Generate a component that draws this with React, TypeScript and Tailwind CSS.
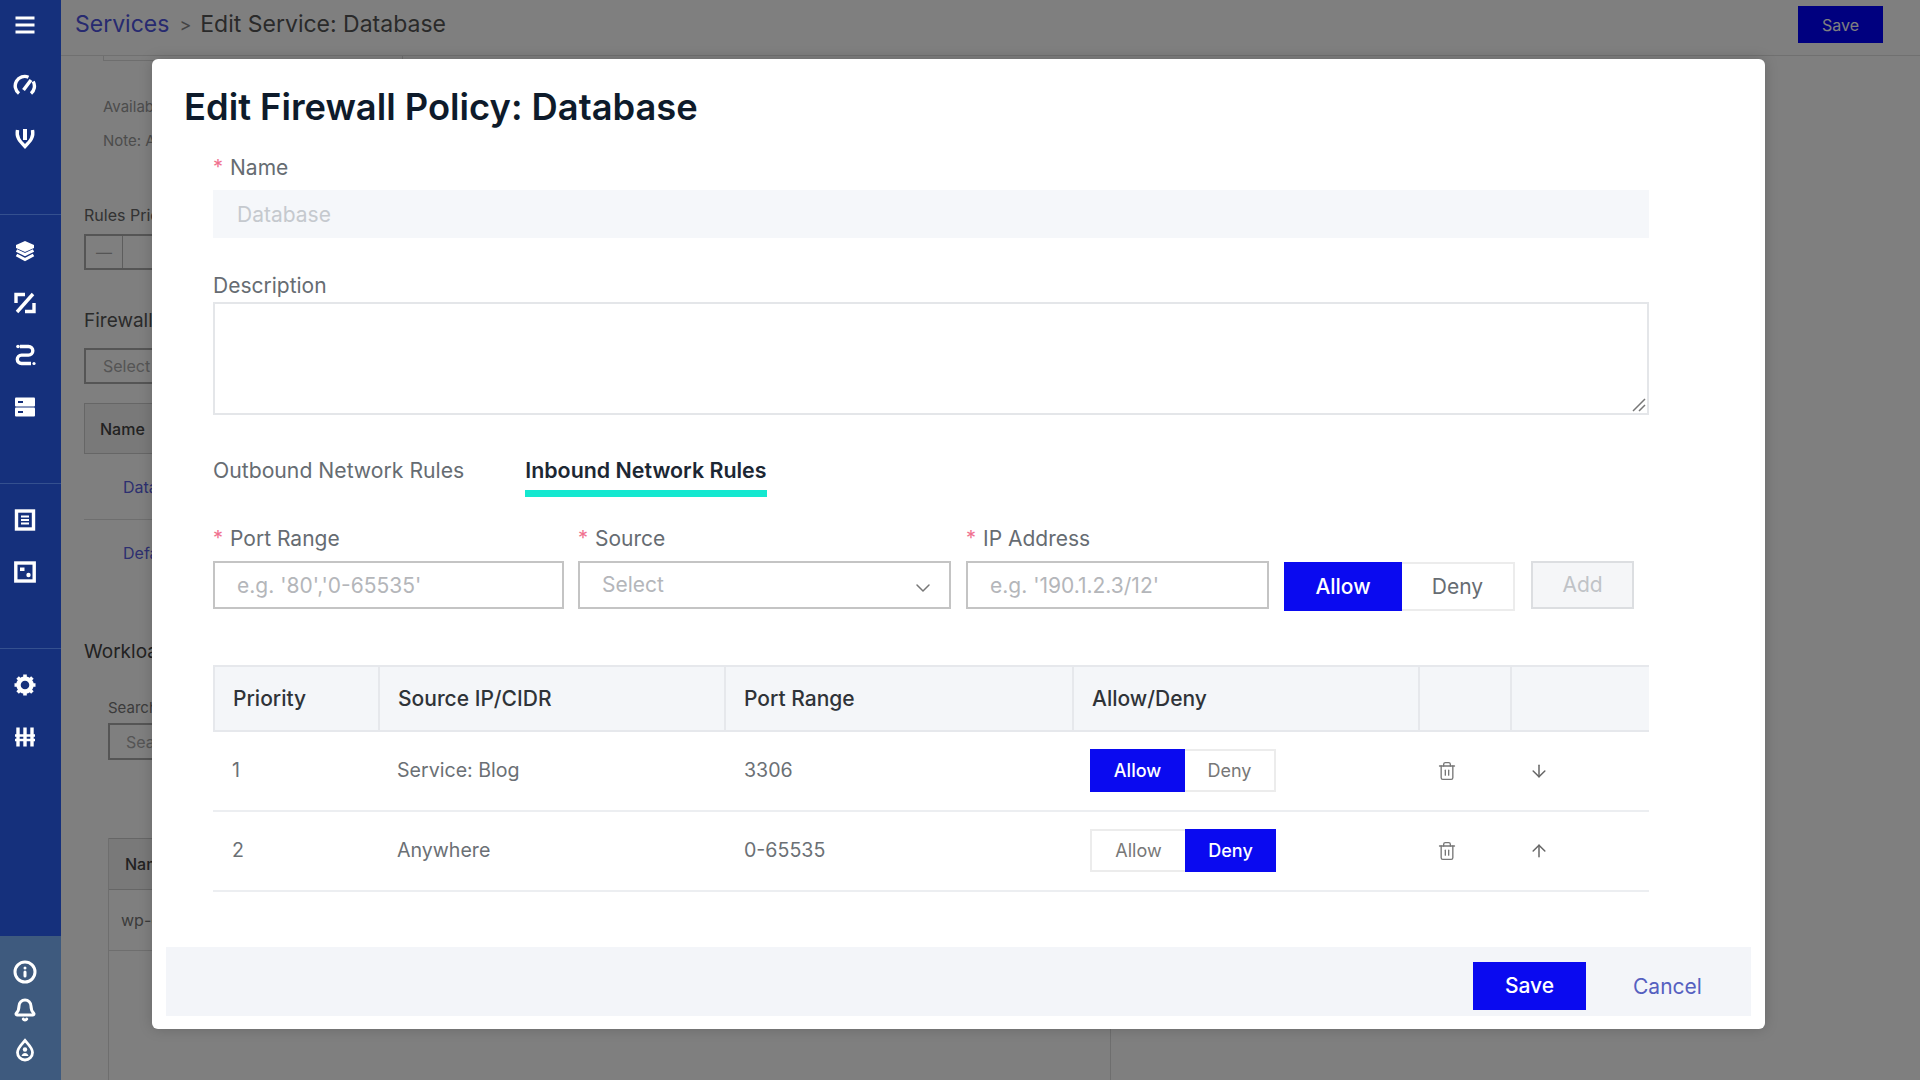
import { ArrowDown, ArrowUp, Bell, ChevronDown, Info, Trash2 } from "lucide-react"
import type { ReactNode } from "react"

function Glyph({ children }: { children: ReactNode }) {
  return (
    <svg viewBox="0 0 24 24" width="24" height="24" fill="none" stroke="white" strokeWidth="3" className="block">
      {children}
    </svg>
  )
}

const MenuIcon = () => (
  <Glyph>
    <path d="M2.5 5h19M2.500 12h19M2.500 19h19" />
  </Glyph>
)

const GaugeIcon = () => (
  <Glyph>
    <path d="M6 19.500A9.500 9.500 0 0 1 15.500 3.200M20.200 7.500a9.500 9.500 0 0 1-2.200 12" strokeWidth="3.400" />
    <path d="M10.500 16 18 6" strokeWidth="3.400" />
  </Glyph>
)

const ShieldIcon = () => (
  <Glyph>
    <path d="M4.500 4C3 11 6.500 15 12 20.500C17.500 15 21 11 19.500 4" strokeWidth="3.400" />
    <path d="M12 3v11" strokeWidth="4" />
  </Glyph>
)

const LayersIcon = () => (
  <Glyph>
    <path d="M12 2l9 4v3l-9 4-9-4V6z" fill="white" stroke="none" />
    <path d="M3.500 11.500 12 15.500l8.500-4M3.500 16 12 20.500l8.500-4.500" strokeWidth="3" />
  </Glyph>
)

const PercentIcon = () => (
  <Glyph>
    <path d="M4 21 20 3" strokeWidth="3.400" />
    <path d="M3 12V3.500H12M21 12v8.500H12" strokeWidth="3.400" />
  </Glyph>
)

const RouteIcon = () => (
  <Glyph>
    <circle cx="5" cy="3.500" r="1.800" fill="white" stroke="none" />
    <path d="M7 3.500h8.500a4.300 4.300 0 0 1 0 8.600H8.500a4.200 4.200 0 0 0 0 8.400H18" strokeWidth="3.400" />
    <circle cx="21" cy="20.500" r="1.600" fill="white" stroke="none" />
  </Glyph>
)

const ServerIcon = () => (
  <svg viewBox="0 0 24 24" width="24" height="24" className="block">
    <rect x="2" y="2.500" width="20" height="9" rx="1" fill="white" />
    <rect x="2" y="12.500" width="20" height="9" rx="1" fill="white" />
    <rect x="5" y="6" width="5" height="2" fill="#15307c" />
    <rect x="5" y="16" width="5" height="2" fill="#15307c" />
  </svg>
)

const ListIcon = () => (
  <Glyph>
    <rect x="3.500" y="3" width="17" height="18" strokeWidth="3.400" />
    <path d="M8 8.500h8M8 12h8M8 15.500h8" strokeWidth="2" />
  </Glyph>
)

const ExpandIcon = () => (
  <Glyph>
    <rect x="2.800" y="3" width="18.400" height="18" strokeWidth="3.400" />
    <path d="M7 7.500h4.500v3.500H7z" fill="white" stroke="none" />
    <circle cx="15.500" cy="15" r="2.200" fill="white" stroke="none" />
  </Glyph>
)

const GearIcon = () => (
  <Glyph>
    <circle cx="12" cy="12" r="6.500" strokeWidth="4.400" />
    <path d="M12 1.500v3M12 19.500v3M1.500 12h3M19.500 12h3M4.600 4.600l2 2M17.400 17.400l2 2M4.600 19.400l2-2M17.400 6.600l2-2" strokeWidth="3.600" />
  </Glyph>
)

const SlidersIcon = () => (
  <Glyph>
    <path d="M5 2.500v19M12 2.500v19M19 2.500v19" strokeWidth="3.400" />
    <path d="M2 10.500h20M2 15h20" strokeWidth="2.600" />
  </Glyph>
)

const DropIcon = () => (
  <Glyph>
    <path d="M12 2.500C9 6 4.500 10 4.500 14.500a7.500 7.500 0 0 0 15 0C19.500 10 15 6 12 2.500Z" strokeWidth="2.800" />
    <circle cx="12" cy="11.500" r="2.200" fill="white" stroke="none" />
    <path d="M8.500 18c.5-2 2-3 3.500-3s3 1 3.500 3z" fill="white" stroke="none" />
  </Glyph>
)

function Sidebar() {
  return (
    <aside className="relative z-20 flex h-full w-[61px] shrink-0 flex-col bg-[#15307c]">
      <div className="flex h-[215px] shrink-0 flex-col items-center border-b border-[#34508f] pr-[12px]">
        <div className="mt-[13px]"><MenuIcon /></div>
        <div className="mt-[37px]"><GaugeIcon /></div>
        <div className="mt-[28px]"><ShieldIcon /></div>
      </div>
      <div className="flex h-[269px] shrink-0 flex-col items-center gap-[28px] border-b border-[#34508f] pt-[24px] pr-[12px]">
        <LayersIcon />
        <PercentIcon />
        <RouteIcon />
        <ServerIcon />
      </div>
      <div className="flex h-[165px] shrink-0 flex-col items-center gap-[28px] border-b border-[#34508f] pt-[24px] pr-[12px]">
        <ListIcon />
        <ExpandIcon />
      </div>
      <div className="flex flex-1 flex-col items-center gap-[28px] pt-[24px] pr-[12px]">
        <GearIcon />
        <SlidersIcon />
      </div>
      <div className="flex h-[144px] shrink-0 flex-col items-center bg-[#3e5a7e] pt-[24px] pr-[11px]">
        <Info size={24} color="white" strokeWidth={3} />
        <div className="mt-[14px]"><Bell size={24} color="white" strokeWidth={3} /></div>
        <div className="mt-[16px]"><DropIcon /></div>
      </div>
    </aside>
  )
}

// the page behind the dialog, only its left edge shows
function BackgroundPage() {
  return (
    <main className="flex min-w-0 flex-1 flex-col bg-white">
      <header className="flex h-[56px] shrink-0 items-center border-b border-[#e0e0e0] pb-[6px] pl-[14px] pr-[37px]">
        <span className="text-[23px] text-[#4f55e0]">Services</span>
        <span className="ml-[10px] mr-[9px] text-[18px] text-[#888]">&gt;</span>
        <span className="text-[23px] text-[#555]">Edit Service: Database</span>
        <button className="ml-auto h-[37px] w-[85px] bg-[#0000ff] text-[16px] text-white">Save</button>
      </header>
      <div className="flex flex-col pl-[23px]">
        <div className="ml-[19px] h-[5px] w-[300px] border border-t-0 border-[#ddd]" />
        <p className="ml-[19px] mt-[36px] text-[15px] leading-[20px] text-[#999]">Available</p>
        <p className="ml-[19px] mt-[14px] text-[15px] leading-[20px] text-[#999]">Note: All</p>
        <p className="mt-[52px] text-[16px] leading-[24px] text-[#666]">Rules Priority</p>
        <div className="mt-[7px] flex h-[36px] w-[200px] border-2 border-[#aaa]">
          <span className="flex w-[37px] items-center justify-center border-r border-[#bbb] text-[#aaa]">—</span>
        </div>
        <p className="mt-[37px] text-[19px] leading-[28px] text-[#555]">Firewall Policies</p>
        <div className="mt-[13px] flex h-[36px] w-[300px] items-center border-2 border-[#aaa] pl-[17px] text-[16px] text-[#aaa]">Select</div>
        <div className="mt-[19px] flex h-[51px] w-[1000px] items-center border border-[#ccc] bg-[#f2f2f2] pl-[15px] text-[16px] font-medium text-[#444]">Name</div>
        <div className="flex h-[66px] w-[1000px] items-center border-b border-[#ddd] pl-[39px] text-[16px] text-[#5a5fe0]">Database</div>
        <div className="flex h-[66px] w-[1000px] items-center pl-[39px] text-[16px] text-[#5a5fe0]">Default</div>
        <p className="mt-[52px] text-[19px] leading-[28px] text-[#444]">Workloads</p>
        <p className="ml-[24px] mt-[32px] text-[15px] leading-[20px] text-[#777]">Search</p>
        <div className="ml-[24px] mt-[5px] flex h-[37px] w-[300px] items-center border-2 border-[#aaa] pl-[16px] text-[16px] text-[#aaa]">Search</div>
        <div className="ml-[24px] mt-[78px] h-[400px] w-[1003px] border-x border-[#ddd]">
          <div className="flex h-[52px] items-center border-y border-[#ccc] bg-[#f2f2f2] pl-[16px] text-[16px] font-medium text-[#444]">Name</div>
          <div className="flex h-[61px] items-center border-b border-[#ddd] pl-[12px] text-[16px] text-[#777]">wp-deploy</div>
        </div>
      </div>
    </main>
  )
}

function FieldLabel({ required, children }: { required?: boolean; children: ReactNode }) {
  return (
    <label className="flex h-[28px] items-center text-[21px] text-[#666c72]">
      {required && <span className="mr-[7px] mt-[-2px] text-[20px] text-[#f0708f]">*</span>}
      {children}
    </label>
  )
}

const inputClass =
  "h-[48px] w-full border-2 border-[#c4c4c4] bg-white px-[22px] text-[21px] outline-none placeholder:text-[#b4b6ba]"

function RowToggle({ value }: { value: "Allow" | "Deny" }) {
  const allowOn = value === "Allow"
  return (
    <div className="mt-[-1px] flex h-[43px] w-[186px] text-[18px]">
      <span className={allowOn
        ? "flex w-[95px] items-center justify-center bg-[#0a0af0] font-medium text-white"
        : "flex w-[95px] items-center justify-center border-2 border-r-0 border-[#ececec] text-[#777]"}>
        Allow
      </span>
      <span className={allowOn
        ? "flex w-[91px] items-center justify-center border-2 border-l-0 border-[#ececec] text-[#777]"
        : "flex w-[91px] items-center justify-center bg-[#0a0af0] font-medium text-white"}>
        Deny
      </span>
    </div>
  )
}

const rows = [
  { priority: "1", source: "Service: Blog", port: "3306", action: "Allow" as const, up: false },
  { priority: "2", source: "Anywhere", port: "0-65535", action: "Deny" as const, up: true },
]

const gridCols = "grid grid-cols-[167px_346px_348px_346px_92px_137px]"

function RulesTable() {
  return (
    <div className="mt-[56px] w-[1436px]">
      <div className={`${gridCols} h-[67px] border-y-2 border-[#e6e8ec] bg-[#f4f6f9] text-[21px] font-medium text-[#2f3338]`}>
        <div className="flex items-center border-x-2 border-[#e6e8ec] pl-[18px]">Priority</div>
        <div className="flex items-center border-r-2 border-[#e6e8ec] pl-[18px]">Source IP/CIDR</div>
        <div className="flex items-center border-r-2 border-[#e6e8ec] pl-[18px]">Port Range</div>
        <div className="flex items-center border-r-2 border-[#e6e8ec] pl-[18px]">Allow/Deny</div>
        <div className="border-r-2 border-[#e6e8ec]" />
        <div />
      </div>
      {rows.map((row) => (
        <div key={row.priority} className={`${gridCols} h-[80px] items-center border-b-2 border-[#eceef1] text-[19.600px] text-[#6b7075]`}>
          <div className="pl-[19px]">{row.priority}</div>
          <div className="pl-[17px]">{row.source}</div>
          <div className="pl-[18px]">{row.port}</div>
          <div className="pl-[16px]"><RowToggle value={row.action} /></div>
          <div className="pl-[17px]"><Trash2 size={20} strokeWidth={1.6} color="#777" /></div>
          <div className="pl-[17px]">
            {row.up ? <ArrowUp size={20} strokeWidth={1.8} color="#666" /> : <ArrowDown size={20} strokeWidth={1.8} color="#666" />}
          </div>
        </div>
      ))}
    </div>
  )
}

function PolicyDialog() {
  return (
    <div className="absolute left-[152px] top-[59px] z-20 flex h-[970px] w-[1613px] flex-col rounded-md bg-white shadow-[0_0_14px_rgba(0,0,0,0.18)]">
      <h1 className="ml-[32px] mt-[26px] text-[36.300px] font-semibold leading-[44px] text-[#0e1b2b]">
        Edit Firewall Policy: Database
      </h1>
      <div className="ml-[61px] flex w-[1436px] flex-col">
        <div className="mt-[25px]"><FieldLabel required>Name</FieldLabel></div>
        <input
          disabled
          value="Database"
          className="mt-[8px] h-[48px] w-full bg-[#f5f7fa] px-[24px] text-[21px] text-[#c5c9ce]"
        />
        <div className="mt-[34px]"><FieldLabel>Description</FieldLabel></div>
        <div className="relative mt-[2px] h-[113px]">
          <textarea className="block h-full w-full resize-none border-2 border-[#e4e6e9] outline-none" />
          <svg viewBox="0 0 14 14" width="14" height="14" className="absolute bottom-[3px] right-[3px]" stroke="#777" strokeWidth="1.500">
            <path d="M1 13 13 1M7 13l6-6" />
          </svg>
        </div>

        <div className="mt-[41px] flex gap-[61px] text-[21.200px]">
          <span className="h-[41px] leading-[28px] text-[#666c72]">Outbound Network Rules</span>
          <span className="h-[41px] border-b-[7px] border-[#14e8d0] text-[21.400px] font-semibold leading-[28px] text-[#1c2733]">
            Inbound Network Rules
          </span>
        </div>

        <div className="mt-[28px] flex items-end">
          <div className="w-[351px]">
            <FieldLabel required>Port Range</FieldLabel>
            <input placeholder="e.g. '80','0-65535'" className={`mt-[8px] ${inputClass}`} />
          </div>
          <div className="ml-[14px] w-[373px]">
            <FieldLabel required>Source</FieldLabel>
            <div className={`mt-[8px] flex items-center justify-between text-[#b4b6ba] ${inputClass}`}>
              Select
              <ChevronDown size={24} strokeWidth={1.5} color="#777" className="mr-[-8px] mt-[6px]" />
            </div>
          </div>
          <div className="ml-[15px] w-[303px]">
            <FieldLabel required>IP Address</FieldLabel>
            <input placeholder="e.g. '190.1.2.3/12'" className={`mt-[8px] ${inputClass}`} />
          </div>
          <div className="ml-[15px] mb-[-2px] flex h-[49px] w-[231px] text-[21px]">
            <span className="flex w-[118px] items-center justify-center bg-[#0a0af0] font-medium text-white">Allow</span>
            <span className="flex w-[113px] items-center justify-center border-2 border-l-0 border-[#ececec] text-[#666c72]">Deny</span>
          </div>
          <button className="ml-[16px] h-[48px] w-[103px] border-2 border-[#dcdee1] bg-[#f5f6f8] text-[21px] text-[#c0c3c7]">
            Add
          </button>
        </div>

        <RulesTable />
      </div>

      <div className="ml-[14px] mt-[55px] flex h-[69px] w-[1585px] items-center bg-[#f3f5f9]">
        <button className="ml-[1307px] mt-[9px] h-[48px] w-[113px] bg-[#0a0af0] text-[21px] font-medium text-white">Save</button>
        <span className="ml-[47px] mt-[10px] text-[21px] text-[#5560c0]">Cancel</span>
      </div>
    </div>
  )
}

export default function App() {
  return (
    <div className="relative flex h-screen w-screen overflow-hidden font-['Inter',sans-serif]">
      <Sidebar />
      <BackgroundPage />
      <div className="absolute inset-0 z-10 bg-black/50" />
      <PolicyDialog />
    </div>
  )
}
